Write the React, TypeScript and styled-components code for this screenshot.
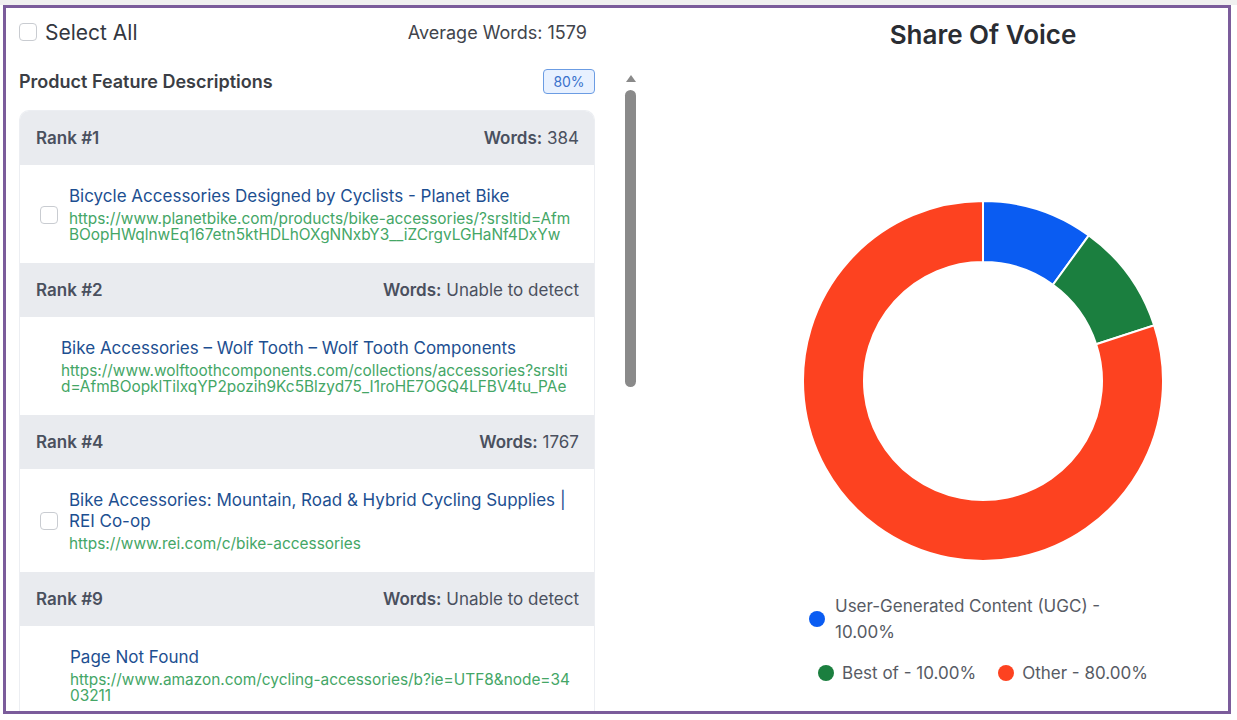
import React from "react";
import styled, { createGlobalStyle } from "styled-components";

const Global = createGlobalStyle`
  html, body { margin: 0; padding: 0; }
  body {
    font-family: Inter, "Noto Sans", "Liberation Sans", sans-serif;
    background: #ffffff;
    -webkit-font-smoothing: antialiased;
  }
  * { box-sizing: border-box; }
`;

const Page = styled.div`
  width: 1237px;
  height: 720px;
  padding: 5px 6px 6px 3px;
  background: linear-gradient(#f0f0f0 0 5px, #ffffff 5px);
`;

const Frame = styled.div`
  width: 100%;
  height: 100%;
  border: 3px solid #7b5c9b;
  background: #fff;
  display: grid;
  grid-template-columns: 732px 1fr;
  overflow: hidden;
`;

const LeftCol = styled.div`
  display: flex;
  flex-direction: column;
  padding-left: 13px;
  min-height: 0;
  overflow: hidden;
`;

const TopBar = styled.div`
  width: 568px;
  padding-top: 13px;
  height: 35px;
  display: flex;
  align-items: center;
  justify-content: space-between;
`;

const CheckLabel = styled.label`
  display: flex;
  align-items: center;
  gap: 8px;
  font-size: 21px;
  color: #333740;
`;

const Box = styled.span`
  display: inline-block;
  flex: none;
  width: 18px;
  height: 18px;
  border: 1.5px solid #c9ccd1;
  border-radius: 4px;
  background: #fff;
`;

const AvgWords = styled.div`
  font-size: 18px;
  color: #41444b;
`;

const ScrollArea = styled.div`
  flex: 1;
  min-height: 0;
  margin-top: 26px;
  display: flex;
  align-items: flex-start;
`;

const ScrollContent = styled.div`
  width: 576px;
  height: 100%;
  overflow: hidden;
`;

const SectionRow = styled.div`
  height: 25px;
  display: flex;
  align-items: center;
  justify-content: space-between;
`;

const SectionTitle = styled.div`
  font-size: 18px;
  font-weight: 600;
  color: #3b3e45;
  margin-top: -1px;
`;

const Badge = styled.span`
  width: 52px;
  height: 25px;
  display: flex;
  align-items: center;
  justify-content: center;
  background: #e8f1ff;
  border: 1px solid #6b9ce3;
  border-radius: 4px;
  color: #3a72cc;
  font-size: 14px;
`;

const CardList = styled.div`
  margin-top: 16px;
  border: 1px solid #eceef2;
  border-bottom: none;
  border-radius: 10px 10px 0 0;
  overflow: hidden;
`;

const RankHeader = styled.div`
  height: 54px;
  padding: 0 15px 0 16px;
  background: #e9ebef;
  display: flex;
  align-items: center;
  justify-content: space-between;
  font-size: 17px;
  color: #4a505e;
`;

const RankTitle = styled.span`
  font-weight: 600;
`;

const WordsLabel = styled.span`
  font-weight: 600;
`;

const RankBody = styled.div<{ $indent: number }>`
  padding: 21px 18px 20px ${(p) => p.$indent}px;
  display: flex;
  align-items: center;
  gap: 11px;
  background: #fff;
`;

const Info = styled.div`
  flex: 1;
  min-width: 0;
`;

const Title = styled.div`
  font-size: 17px;
  line-height: 21px;
  color: #1d4f91;
`;

const Url = styled.div`
  margin-top: 4px;
  font-size: 15.4px;
  line-height: 16px;
  color: #44a666;
  word-break: break-all;
`;

const ScrollTrack = styled.div`
  margin-left: 30px;
  width: 11px;
  padding-top: 6px;
  display: flex;
  flex-direction: column;
  align-items: center;
  gap: 8px;
`;

const ArrowUp = styled.span`
  width: 0;
  height: 0;
  border-left: 5px solid transparent;
  border-right: 5px solid transparent;
  border-bottom: 7px solid #8a8a8a;
`;

const Thumb = styled.span`
  width: 11px;
  height: 297px;
  border-radius: 6px;
  background: #8a8a8a;
`;

const RightCol = styled.div`
  display: flex;
  flex-direction: column;
  align-items: center;
  padding-top: 11px;
`;

const ChartTitle = styled.h2`
  margin: 0;
  font-size: 26px;
  line-height: 32px;
  font-weight: 600;
  color: #2a2d33;
`;

const Donut = styled.svg`
  margin-top: 149px;
  display: block;
`;

const Legend = styled.div`
  margin-top: 31px;
  width: 348px;
  display: flex;
  flex-wrap: wrap;
  justify-content: center;
  column-gap: 22px;
  row-gap: 15px;
`;

const LegendItem = styled.div<{ $full?: boolean }>`
  display: flex;
  align-items: center;
  gap: ${(p) => (p.$full ? 10 : 8)}px;
  width: ${(p) => (p.$full ? "100%" : "auto")};
`;

const Dot = styled.span<{ $color: string }>`
  flex: none;
  width: 16px;
  height: 16px;
  border-radius: 50%;
  background: ${(p) => p.$color};
`;

const LegendLabel = styled.span<{ $max?: number }>`
  font-size: 17px;
  line-height: 26px;
  color: #575b64;
  max-width: ${(p) => (p.$max ? `${p.$max}px` : "none")};
`;

type Row = {
  rank: number;
  words: string;
  title: string;
  url: string;
  checkbox: boolean;
  indent: number;
};

const rows: Row[] = [
  {
    rank: 1,
    words: "384",
    title: "Bicycle Accessories Designed by Cyclists - Planet Bike",
    url: "https://www.planetbike.com/products/bike-accessories/?srsltid=AfmBOopHWqlnwEq167etn5ktHDLhOXgNNxbY3__iZCrgvLGHaNf4DxYw",
    checkbox: true,
    indent: 20,
  },
  {
    rank: 2,
    words: "Unable to detect",
    title: "Bike Accessories – Wolf Tooth – Wolf Tooth Components",
    url: "https://www.wolftoothcomponents.com/collections/accessories?srsltid=AfmBOopklTilxqYP2pozih9Kc5Blzyd75_I1roHE7OGQ4LFBV4tu_PAe",
    checkbox: false,
    indent: 41,
  },
  {
    rank: 4,
    words: "1767",
    title: "Bike Accessories: Mountain, Road & Hybrid Cycling Supplies | REI Co-op",
    url: "https://www.rei.com/c/bike-accessories",
    checkbox: true,
    indent: 20,
  },
  {
    rank: 9,
    words: "Unable to detect",
    title: "Page Not Found",
    url: "https://www.amazon.com/cycling-accessories/b?ie=UTF8&node=3403211",
    checkbox: false,
    indent: 50,
  },
];

const segments = [
  { label: "User-Generated Content (UGC)", value: 10, color: "#0a5cf2" },
  { label: "Best of", value: 10, color: "#1b7f3f" },
  { label: "Other", value: 80, color: "#fd4220" },
];

function arc(cx: number, cy: number, R: number, r: number, a0: number, a1: number) {
  const rad = (a: number) => (a * Math.PI) / 180;
  const pt = (rr: number, a: number) => [cx + rr * Math.sin(rad(a)), cy - rr * Math.cos(rad(a))];
  const large = a1 - a0 > 180 ? 1 : 0;
  const [x0, y0] = pt(R, a0);
  const [x1, y1] = pt(R, a1);
  const [x2, y2] = pt(r, a1);
  const [x3, y3] = pt(r, a0);
  return `M${x0} ${y0} A${R} ${R} 0 ${large} 1 ${x1} ${y1} L${x2} ${y2} A${r} ${r} 0 ${large} 0 ${x3} ${y3} Z`;
}

function DonutChart() {
  let acc = 0;
  return (
    <Donut width={362} height={362} viewBox="0 0 362 362">
      {segments.map((s) => {
        const a0 = (acc / 100) * 360;
        acc += s.value;
        const a1 = (acc / 100) * 360;
        return (
          <path
            key={s.label}
            d={arc(181, 181, 180, 119, a0, a1)}
            fill={s.color}
            stroke="#ffffff"
            strokeWidth={2}
          />
        );
      })}
    </Donut>
  );
}

export default function App() {
  return (
    <>
      <Global />
      <Page>
        <Frame>
          <LeftCol>
            <TopBar>
              <CheckLabel>
                <Box />
                Select All
              </CheckLabel>
              <AvgWords>Average Words: 1579</AvgWords>
            </TopBar>
            <ScrollArea>
              <ScrollContent>
                <SectionRow>
                  <SectionTitle>Product Feature Descriptions</SectionTitle>
                  <Badge>80%</Badge>
                </SectionRow>
                <CardList>
                  {rows.map((r) => (
                    <React.Fragment key={r.rank}>
                      <RankHeader>
                        <RankTitle>Rank #{r.rank}</RankTitle>
                        <span>
                          <WordsLabel>Words:</WordsLabel> {r.words}
                        </span>
                      </RankHeader>
                      <RankBody $indent={r.indent}>
                        {r.checkbox && <Box />}
                        <Info>
                          <Title>{r.title}</Title>
                          <Url>{r.url}</Url>
                        </Info>
                      </RankBody>
                    </React.Fragment>
                  ))}
                </CardList>
              </ScrollContent>
              <ScrollTrack>
                <ArrowUp />
                <Thumb />
              </ScrollTrack>
            </ScrollArea>
          </LeftCol>
          <RightCol>
            <ChartTitle>Share Of Voice</ChartTitle>
            <DonutChart />
            <Legend>
              {segments.map((s, i) => (
                <LegendItem key={s.label} $full={i === 0}>
                  <Dot $color={s.color} />
                  <LegendLabel $max={i === 0 ? 290 : undefined}>
                    {s.label} - {s.value.toFixed(2)}%
                  </LegendLabel>
                </LegendItem>
              ))}
            </Legend>
          </RightCol>
        </Frame>
      </Page>
    </>
  );
}
